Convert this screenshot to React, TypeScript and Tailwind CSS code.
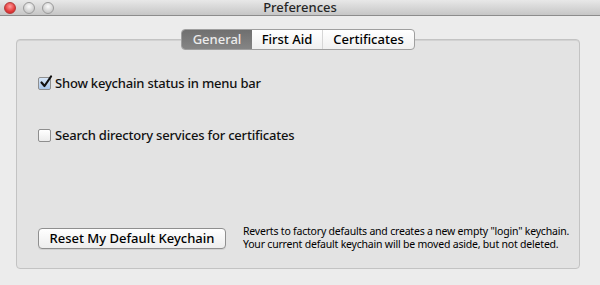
const font = { fontFamily: '"Lucida Grande", "Noto Sans", sans-serif' }

const tabs = ['General', 'First Aid', 'Certificates']

function Light({ red }: { red?: boolean }) {
  return (
    <div
      className={`w-[12px] h-[12px] rounded-full border ${
        red
          ? 'border-[#b23a3a] bg-[radial-gradient(circle_at_50%_35%,#ff9a9a,#e33b3b_60%,#c42222)]'
          : 'border-[#9a9a9a] bg-[radial-gradient(circle_at_50%_35%,#fbfbfb,#d2d2d2_60%,#bdbdbd)]'
      }`}
    />
  )
}

function Check({ checked, label }: { checked?: boolean; label: string }) {
  return (
    <div className="flex items-center gap-[4px]">
      <div
        className={`w-[13px] h-[13px] rounded-[2px] border border-[#8e8e8e] relative ${
          checked ? 'bg-gradient-to-b from-[#d7e6f7] to-[#a9c6ea]' : 'bg-gradient-to-b from-white to-[#ececec]'
        }`}
      >
        {checked && (
          <svg className="absolute left-[0px] top-[-3px]" width="14" height="14" viewBox="0 0 14 14">
            <path d="M2.5 7.5 L5.5 11 L12 1.5" fill="none" stroke="#111" strokeWidth="2.2" strokeLinecap="round" strokeLinejoin="round" />
          </svg>
        )}
      </div>
      <span className="text-[13px] font-medium text-[#111] leading-none tracking-[-0.2px]">{label}</span>
    </div>
  )
}

export default function App() {
  return (
    <div className="w-[600px] h-[285px] bg-[#ececec] flex flex-col overflow-hidden" style={font}>
      {/* Title bar */}
      <div className="h-[16px] flex items-center relative bg-gradient-to-b from-[#e8e8e8] to-[#c6c6c6] border-b border-[#8c8c8c]">
        <div className="flex gap-[7px] pl-[4px]">
          <Light red />
          <Light />
          <Light />
        </div>
        <div className="absolute inset-0 text-center text-[13px] leading-[15px] font-medium text-[#262626]">Preferences</div>
      </div>

      {/* Group box */}
      <div className="relative ml-[16px] w-[564px] mt-[23px] h-[230px] bg-[#e3e3e3] border border-[#c3c3c3] rounded-[4px] shadow-[inset_0_1px_0_#d2d2d2]">
        <div className="absolute left-0 right-0 top-[-11px] flex justify-center">
          <div className="flex h-[21px] rounded-[4px] border border-[#9f9f9f] bg-gradient-to-b from-white to-[#f0f0f0] overflow-hidden text-[13px] font-medium">
            {tabs.map((t, i) => (
              <div
                key={t}
                className={`flex items-center justify-center ${
                  i === 0
                    ? 'w-[70px] bg-gradient-to-b from-[#6f6f6f] to-[#858585] text-[#ececec]'
                    : i === 1
                    ? 'w-[71px] text-black border-r border-[#d6d6d6]'
                    : 'w-[91px] text-black'
                }`}
              >
                {t}
              </div>
            ))}
          </div>
        </div>

        <div className="pt-[37px] pl-[21px] flex flex-col gap-[39px]">
          <Check checked label="Show keychain status in menu bar" />
          <Check label="Search directory services for certificates" />
        </div>

        <div className="absolute left-[21px] top-[188px] flex items-start gap-[17px]">
          <button className="w-[188px] h-[21px] rounded-[4px] border border-[#8f8f8f] bg-gradient-to-b from-white to-[#ededed] text-[13px] font-medium text-black shadow-[0_1px_0_rgba(0,0,0,0.08)] whitespace-nowrap">
            Reset My Default Keychain
          </button>
          <div className="text-[10.5px] leading-[12.5px] tracking-[-0.2px] text-black -mt-[3px] whitespace-nowrap">
            <div>Reverts to factory defaults and creates a new empty "login" keychain.</div>
            <div>Your current default keychain will be moved aside, but not deleted.</div>
          </div>
        </div>
      </div>
    </div>
  )
}
